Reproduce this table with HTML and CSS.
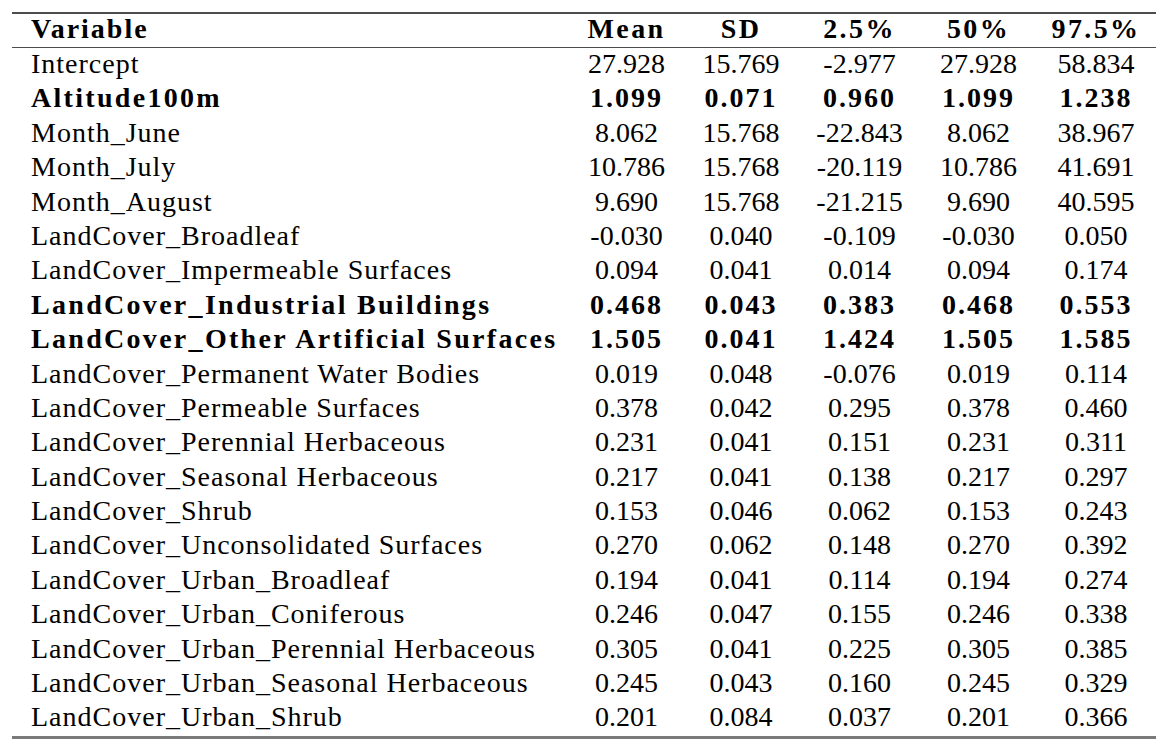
FILE: index.html
```html
<!DOCTYPE html>
<html lang="en">
<head>
<meta charset="utf-8">
<title>Posterior summary</title>
<link rel="stylesheet" href="styles.css">
</head>
<body>
<div class="wrap">
<table class="results">
  <colgroup>
    <col class="c-var"><col class="c-mean"><col class="c-sd"><col class="c-lo"><col class="c-med"><col class="c-hi">
  </colgroup>
  <thead>
    <tr><th class="lbl">Variable</th><th>Mean</th><th>SD</th><th>2.5%</th><th>50%</th><th>97.5%</th></tr>
  </thead>
  <tbody>
    <tr><td class="lbl">Intercept</td><td>27.928</td><td>15.769</td><td>-2.977</td><td>27.928</td><td>58.834</td></tr>
    <tr class="bold"><td class="lbl">Altitude100m</td><td>1.099</td><td>0.071</td><td>0.960</td><td>1.099</td><td>1.238</td></tr>
    <tr><td class="lbl">Month_June</td><td>8.062</td><td>15.768</td><td>-22.843</td><td>8.062</td><td>38.967</td></tr>
    <tr><td class="lbl">Month_July</td><td>10.786</td><td>15.768</td><td>-20.119</td><td>10.786</td><td>41.691</td></tr>
    <tr><td class="lbl">Month_August</td><td>9.690</td><td>15.768</td><td>-21.215</td><td>9.690</td><td>40.595</td></tr>
    <tr><td class="lbl">LandCover_Broadleaf</td><td>-0.030</td><td>0.040</td><td>-0.109</td><td>-0.030</td><td>0.050</td></tr>
    <tr><td class="lbl">LandCover_Impermeable Surfaces</td><td>0.094</td><td>0.041</td><td>0.014</td><td>0.094</td><td>0.174</td></tr>
    <tr class="bold"><td class="lbl">LandCover_Industrial Buildings</td><td>0.468</td><td>0.043</td><td>0.383</td><td>0.468</td><td>0.553</td></tr>
    <tr class="bold"><td class="lbl">LandCover_Other Artificial Surfaces</td><td>1.505</td><td>0.041</td><td>1.424</td><td>1.505</td><td>1.585</td></tr>
    <tr><td class="lbl">LandCover_Permanent Water Bodies</td><td>0.019</td><td>0.048</td><td>-0.076</td><td>0.019</td><td>0.114</td></tr>
    <tr><td class="lbl">LandCover_Permeable Surfaces</td><td>0.378</td><td>0.042</td><td>0.295</td><td>0.378</td><td>0.460</td></tr>
    <tr><td class="lbl">LandCover_Perennial Herbaceous</td><td>0.231</td><td>0.041</td><td>0.151</td><td>0.231</td><td>0.311</td></tr>
    <tr><td class="lbl">LandCover_Seasonal Herbaceous</td><td>0.217</td><td>0.041</td><td>0.138</td><td>0.217</td><td>0.297</td></tr>
    <tr><td class="lbl">LandCover_Shrub</td><td>0.153</td><td>0.046</td><td>0.062</td><td>0.153</td><td>0.243</td></tr>
    <tr><td class="lbl">LandCover_Unconsolidated Surfaces</td><td>0.270</td><td>0.062</td><td>0.148</td><td>0.270</td><td>0.392</td></tr>
    <tr><td class="lbl">LandCover_Urban_Broadleaf</td><td>0.194</td><td>0.041</td><td>0.114</td><td>0.194</td><td>0.274</td></tr>
    <tr><td class="lbl">LandCover_Urban_Coniferous</td><td>0.246</td><td>0.047</td><td>0.155</td><td>0.246</td><td>0.338</td></tr>
    <tr><td class="lbl">LandCover_Urban_Perennial Herbaceous</td><td>0.305</td><td>0.041</td><td>0.225</td><td>0.305</td><td>0.385</td></tr>
    <tr><td class="lbl">LandCover_Urban_Seasonal Herbaceous</td><td>0.245</td><td>0.043</td><td>0.160</td><td>0.245</td><td>0.329</td></tr>
    <tr><td class="lbl">LandCover_Urban_Shrub</td><td>0.201</td><td>0.084</td><td>0.037</td><td>0.201</td><td>0.366</td></tr>
  </tbody>
</table>
</div>
</body>
</html>
```
FILE: styles.css
```css
html, body {
  margin: 0;
  padding: 0;
  background: #ffffff;
}

.wrap {
  padding: 12px 0 0 12px;
}

.results {
  border-collapse: collapse;
  table-layout: fixed;
  width: 1144px;
  font-family: "Liberation Serif", "Times New Roman", serif;
  font-size: 28px;
  color: #000000;
  border-top: 2px solid #4d4d4d;
  border-bottom: 3px solid #7a7a7a;
}

.c-var { width: 557px; }
.c-mean { width: 115px; }
.c-sd { width: 114px; }
.c-lo { width: 123px; }
.c-med { width: 115px; }
.c-hi { width: 120px; }

.results th,
.results td {
  padding: 0;
  text-align: center;
  white-space: nowrap;
  font-weight: normal;
  vertical-align: top;
}

.results thead th {
  height: 33px;
  line-height: 30px;
  font-weight: bold;
  letter-spacing: 2.4px;
  border-bottom: 1px solid #4d4d4d;
}

.results tbody td {
  height: 34.4px;
  line-height: 32.4px;
}

.results .lbl {
  text-align: left;
  padding-left: 19px;
  letter-spacing: 1px;
}

.results thead th.lbl {
  letter-spacing: 2px;
}

.results tr.bold td {
  font-weight: bold;
  letter-spacing: 2px;
}

.results tr.bold td.lbl {
  letter-spacing: 2.3px;
}
```
